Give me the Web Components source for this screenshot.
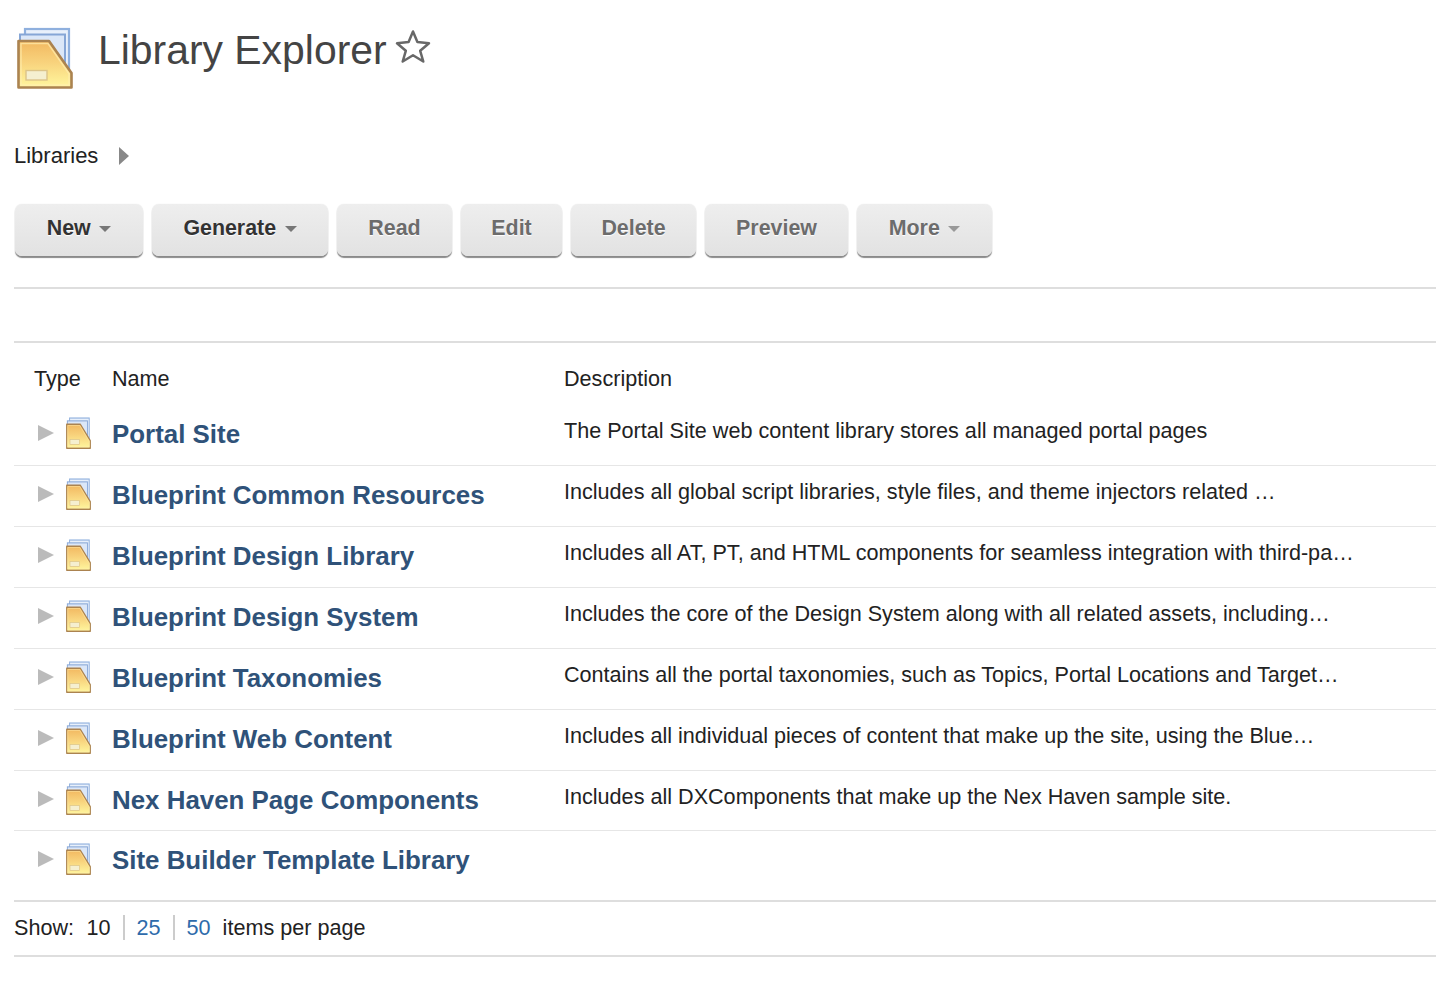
<!DOCTYPE html>
<html lang="en">
<head>
<meta charset="utf-8">
<title>Library Explorer</title>
<style>
html, body { margin: 0; background: #fff; }
body { font-family: "Liberation Sans", Arial, sans-serif; color: #222; }
</style>
</head>
<body>
<lib-page>
  <lib-header slot="header" title="Library Explorer"></lib-header>
  <lib-crumb slot="crumb">Libraries</lib-crumb>
  <lib-toolbar slot="toolbar">
    <lib-button menu width="128">New</lib-button>
    <lib-button menu width="176">Generate</lib-button>
    <lib-button off width="115">Read</lib-button>
    <lib-button off width="101">Edit</lib-button>
    <lib-button off width="125">Delete</lib-button>
    <lib-button off width="143">Preview</lib-button>
    <lib-button off menu width="135">More</lib-button>
  </lib-toolbar>
  <lib-table slot="table">
    <lib-row name="Portal Site">The Portal Site web content library stores all managed portal pages</lib-row>
    <lib-row name="Blueprint Common Resources">Includes all global script libraries, style files, and theme injectors related …</lib-row>
    <lib-row name="Blueprint Design Library">Includes all AT, PT, and HTML components for seamless integration with third-pa…</lib-row>
    <lib-row name="Blueprint Design System">Includes the core of the Design System along with all related assets, including…</lib-row>
    <lib-row name="Blueprint Taxonomies">Contains all the portal taxonomies, such as Topics, Portal Locations and Target…</lib-row>
    <lib-row name="Blueprint Web Content">Includes all individual pieces of content that make up the site, using the Blue…</lib-row>
    <lib-row height="60" name="Nex Haven Page Components">Includes all DXComponents that make up the Nex Haven sample site.</lib-row>
    <lib-row last name="Site Builder Template Library"></lib-row>
  </lib-table>
  <lib-pager slot="pager"></lib-pager>
</lib-page>

<script>
// same drawing for the big header icon and the small row icons, gradient ids get a prefix
function folderSvg(id, w, h) {
    return `
    <svg width="${w}" height="${h}" viewBox="0 0 56 62" preserveAspectRatio="none" aria-hidden="true" style="display:block">
        <defs>
            <linearGradient id="${id}-f" x1="0" y1="0" x2="0" y2="1">
                <stop offset="0" stop-color="#f2b860"/>
                <stop offset="0.45" stop-color="#f8d27c"/>
                <stop offset="1" stop-color="#fff79e"/>
            </linearGradient>
        </defs>
        <rect x="8" y="2" width="44" height="46" fill="#e8f0fb" stroke="#8fb0de" stroke-width="2.2"/>
        <rect x="3" y="7.5" width="45" height="44" fill="#dbe7f8" stroke="#86a6d6" stroke-width="2"/>
        <path d="M1.5 14 H32 L54.5 46 V60.5 H1.5 Z" fill="url(#${id}-f)" stroke="#ab8350" stroke-width="2.6" stroke-linejoin="round"/>
        <path d="M4 16.5 H31 L52 46.8 V58 H4 Z" fill="none" stroke="#ffeeb0" stroke-opacity="0.7" stroke-width="1.4"/>
        <rect x="9" y="43.5" width="21" height="9.5" fill="#f5efd0" stroke="#dcc489" stroke-width="1.4"/>
    </svg>`;
}

class LibPage extends HTMLElement {
    constructor() {
        super();
        this.attachShadow({mode: 'open'});
        this.shadowRoot.innerHTML = `
            <style>
                :host { display: block; width: 1436px; padding-left: 14px; box-sizing: border-box; }
                .top { height: 128px; }
                .crumb { height: 74px; }
                .tools { height: 85px; box-sizing: content-box; border-bottom: 2px solid #dedede; }
                .gap { height: 52px; border-bottom: 2px solid #dedede; }
            </style>
            <div class="top"><slot name="header"></slot></div>
            <div class="crumb"><slot name="crumb"></slot></div>
            <div class="tools"><slot name="toolbar"></slot></div>
            <div class="gap"></div>
            <slot name="table"></slot>
            <slot name="pager"></slot>
        `;
    }
}

class LibHeader extends HTMLElement {
    constructor() {
        super();
        this.attachShadow({mode: 'open'});
        this.shadowRoot.innerHTML = `
            <style>
                :host { display: flex; align-items: flex-start; }
                .icon { margin: 27px 0 0 3px; width: 56px; height: 62px; }
                h1 { margin: 24px 0 0 25px; font: 400 40.9px/52px "Liberation Sans", Arial, sans-serif; color: #444; }
                svg.star { margin: 28px 0 0 7px; }
            </style>
            <div class="icon">${folderSvg('big', 56, 62)}</div>
            <h1>${this.getAttribute('title')}</h1>
            <svg class="star" width="38" height="38" viewBox="0 0 38 38" aria-hidden="true">
                <path d="M19 3.5 L23.4 14 L35 15.2 L26.2 22.8 L29.3 33.5 L19 27.2 L8.7 33.5 L11.8 22.8 L3 15.2 L14.6 14 Z" fill="none" stroke="#686868" stroke-width="2.5" stroke-linejoin="round"/>
            </svg>
        `;
    }
}

class LibCrumb extends HTMLElement {
    constructor() {
        super();
        this.attachShadow({mode: 'open'});
        this.shadowRoot.innerHTML = `
            <style>
                :host { display: flex; align-items: center; height: 56px; font-size: 22px; color: #222; }
                .arrow { margin-left: 21px; width: 0; height: 0; border-style: solid; border-width: 9px 0 9px 10px; border-color: transparent transparent transparent #888; }
            </style>
            <slot></slot><span class="arrow"></span>
        `;
    }
}

class LibToolbar extends HTMLElement {
    constructor() {
        super();
        this.attachShadow({mode: 'open'});
        this.shadowRoot.innerHTML = `
            <style>
                :host { display: flex; gap: 9px; padding: 2px 0 0 1px; }
            </style>
            <slot></slot>
        `;
    }
}

class LibButton extends HTMLElement {
    constructor() {
        super();
        this.attachShadow({mode: 'open'});
        const off = this.hasAttribute('off');
        const menu = this.hasAttribute('menu');
        this.shadowRoot.innerHTML = `
            <style>
                :host {
                    display: flex; align-items: center; justify-content: center; gap: 8.5px;
                    box-sizing: border-box; height: 52px; padding-bottom: 4px; width: ${this.getAttribute('width')}px;
                    border-radius: 7px;
                    background: linear-gradient(#eeeeee, #e2e2e2);
                    box-shadow: 0 2px 1px #8a8a8a, 0 0 1px rgba(0,0,0,0.15);
                    font-weight: bold; font-size: 21.4px;
                    color: ${off ? '#6c6c6c' : '#333'};
                    text-shadow: 0 1px 1px #fff;
                }
                .caret { width: 0; height: 0; margin-top: 2px; border-style: solid; border-width: 6px 6.5px 0 6.5px; border-color: ${off ? '#999' : '#777'} transparent transparent transparent; }
            </style>
            <slot></slot>${menu ? '<span class="caret"></span>' : ''}
        `;
    }
}

class LibTable extends HTMLElement {
    constructor() {
        super();
        this.attachShadow({mode: 'open'});
        this.shadowRoot.innerHTML = `
            <style>
                :host { display: block; font-size: 21.6px; color: #222; }
                .head { display: grid; grid-template-columns: 98px 452px 1fr; height: 62px; box-sizing: border-box; padding-top: 23px; line-height: 26px; }
                .head span:first-child { padding-left: 20px; }
            </style>
            <div class="head"><span>Type</span><span>Name</span><span>Description</span></div>
            <slot></slot>
        `;
    }
}

class LibRow extends HTMLElement {
    constructor() {
        super();
        this.attachShadow({mode: 'open'});
        const last = this.hasAttribute('last');
        const height = last ? 71 : (this.getAttribute('height') || 61);
        const id = 'r' + this.getAttribute('name').replace(/\W/g, '');
        this.shadowRoot.innerHTML = `
            <style>
                :host {
                    display: grid; grid-template-columns: 98px 452px 1fr;
                    box-sizing: border-box; height: ${height}px;
                    border-bottom: ${last ? '2px solid #dedede' : '1px solid #e6e6e6'};
                }
                .type { display: flex; align-items: flex-start; padding: 12px 0 0 24px; gap: 12px; }
                .tri { margin-top: 8px; width: 0; height: 0; border-style: solid; border-width: 8.5px 0 8.5px 16px; border-color: transparent transparent transparent #bbb; }
                .name { padding-top: 13px; font: bold 25.9px/32px "Liberation Sans", Arial, sans-serif; color: #2f5279; white-space: nowrap; }
                .desc { padding-top: 13px; font-size: 21.6px; line-height: 26px; color: #222; white-space: nowrap; }
            </style>
            <div class="type"><span class="tri"></span>${folderSvg(id, 25, 32)}</div>
            <div class="name">${this.getAttribute('name')}</div>
            <div class="desc"><slot></slot></div>
        `;
    }
}

class LibPager extends HTMLElement {
    constructor() {
        super();
        this.attachShadow({mode: 'open'});
        this.shadowRoot.innerHTML = `
            <style>
                :host { display: flex; align-items: center; height: 55px; padding-bottom: 2px; box-sizing: border-box; border-bottom: 2px solid #dedede; font-size: 21.6px; color: #222; }
                .n { padding: 0 12px; line-height: 25px; border-left: 2px solid #ccc; }
                .n.first { border-left: 0; padding-left: 12.5px; }
                .link { color: #2e6bab; }
            </style>
            <span>Show:</span>
            <span class="n first">10</span><span class="n link">25</span><span class="n link">50</span>
            <span>items per page</span>
        `;
    }
}

customElements.define('lib-page', LibPage);
customElements.define('lib-header', LibHeader);
customElements.define('lib-crumb', LibCrumb);
customElements.define('lib-toolbar', LibToolbar);
customElements.define('lib-button', LibButton);
customElements.define('lib-table', LibTable);
customElements.define('lib-row', LibRow);
customElements.define('lib-pager', LibPager);
</script>
</body>
</html>
